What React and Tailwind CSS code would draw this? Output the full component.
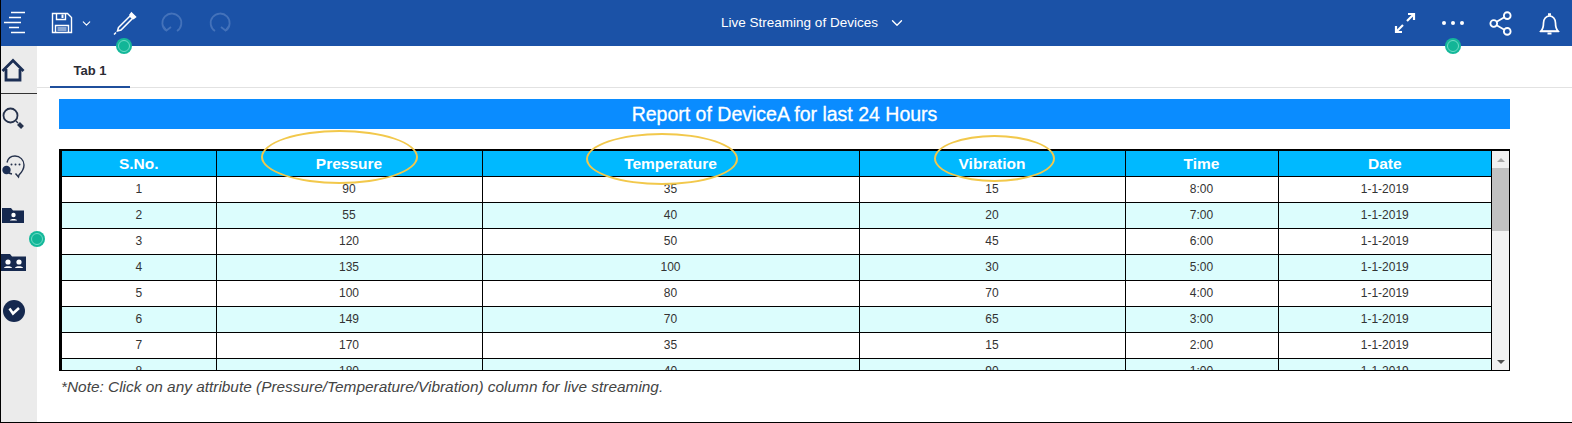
import { Share2, ChevronDown } from "lucide-react";

const rows = [
  [1, 90, 35, 15, "8:00"],
  [2, 55, 40, 20, "7:00"],
  [3, 120, 50, 45, "6:00"],
  [4, 135, 100, 30, "5:00"],
  [5, 100, 80, 70, "4:00"],
  [6, 149, 70, 65, "3:00"],
  [7, 170, 35, 15, "2:00"],
  [8, 180, 40, 90, "1:00"],
];

const headers = ["S.No.", "Pressure", "Temperature", "Vibration", "Time", "Date"];

const Dot = ({ className }) => (
  <div
    className={`absolute w-[16px] h-[16px] rounded-full bg-[#14b89a] p-[2px] ${className}`}
  >
    <div className="w-full h-full rounded-full bg-[#12b597] border border-[#6fdcc6]" />
  </div>
);

const Ring = ({ className }) => (
  <div
    className={`absolute rounded-[50%] border-2 border-[#f2c84b] pointer-events-none ${className}`}
  />
);

const MenuIcon = () => (
  <svg width="24" height="24" viewBox="0 0 24 24" stroke="white" strokeWidth="1.6" fill="none">
    <path d="M8 1.500h14M6 6.500h12M1 11.500h17M6 16.500h10M8 21.500h14" />
  </svg>
);

const SaveIcon = () => (
  <svg width="22" height="22" viewBox="0 0 22 22" stroke="white" strokeWidth="1.4" fill="none">
    <path d="M1.500 1.500h15l4 4v15h-19z" />
    <path d="M5.500 1.500v6h9v-6M4.500 20.500v-7h13v7" />
    <path d="M11.500 2.500v3.500" strokeWidth="2" />
    <path d="M6.500 16h9M6.500 18h9" strokeWidth="1" />
  </svg>
);

const PencilIcon = () => (
  <svg width="24" height="24" viewBox="0 0 24 24" stroke="white" strokeWidth="1.500" fill="none">
    <path d="M5.500 16.500 17 5l2.500 2.500L8 19l-3.500 1z" />
    <path d="M18.500 2l4 4-2 1.500-3.500-3.500z" fill="white" />
    <path d="M1 23.500l2-2" />
  </svg>
);

const UndoIcon = ({ flip }) => (
  <svg
    width="24"
    height="24"
    viewBox="0 0 24 24"
    stroke="#4472ba"
    strokeWidth="1.800"
    fill="none"
    className={flip ? "-scale-x-100" : ""}
  >
    <path d="M6 19.500A9.500 9.500 0 1 1 17 20" />
    <path d="M3 15l3.500 4.500L11 16" />
  </svg>
);

const ExpandIcon = () => (
  <svg width="22" height="22" viewBox="0 0 22 22" stroke="white" strokeWidth="2.200" fill="none">
    <path d="M13 9l7-7M14 2h6v6M9 13l-7 7M2 14v6h6" />
  </svg>
);

const BellIcon = () => (
  <svg width="25" height="25" viewBox="0 0 25 25" stroke="white" strokeWidth="1.700" fill="none">
    <path d="M4 20c2-2 2.500-4 2.500-8 0-4 2.500-7 6-7s6 3 6 7c0 4 .5 6 2.500 8z" />
    <path d="M11 3.500h3" strokeWidth="2.500" />
    <path d="M3 20.500h19" strokeWidth="1.500" />
    <path d="M10.500 22.500h4" strokeWidth="2" />
  </svg>
);

const HomeIcon = () => (
  <svg width="24" height="24" viewBox="0 0 24 24" fill="none" stroke="#1c2f55" strokeWidth="2.800">
    <path d="M1.500 13 12 2.500 22.500 13" />
    <path d="M5 11v11h14V11" />
  </svg>
);

const SearchIcon = () => (
  <svg width="24" height="24" viewBox="0 0 24 24" fill="none" stroke="#26324c">
    <circle cx="8.500" cy="8.500" r="7" strokeWidth="1.800" />
    <path d="M14 14l2 2" strokeWidth="1.500" />
    <path d="M16.500 16.500l4 4" strokeWidth="4" />
  </svg>
);

const ChatIcon = () => (
  <svg width="26" height="26" viewBox="0 0 26 26" fill="none" stroke="#26324c" strokeWidth="1.400">
    <path d="M6 8.500C7 4 10.500 2 14 2c5 0 9 4 9 9 0 4-2 7-5 10l-.5 2-3-3.500" />
    <path d="M6 17c1 1.500 2.500 2.500 5 3" />
    <circle cx="5.500" cy="16" r="4.200" fill="#1c2f55" stroke="none" />
    <circle cx="10.500" cy="10.500" r="1" fill="#26324c" stroke="none" />
    <circle cx="14.500" cy="10.500" r="1" fill="#26324c" stroke="none" />
    <circle cx="18.500" cy="10.500" r="1" fill="#26324c" stroke="none" />
  </svg>
);

const FolderPerson = () => (
  <svg width="24" height="18" viewBox="0 0 24 18">
    <path d="M1 1h9l2 2.500h11V16H1z" fill="#16294f" />
    <circle cx="12.500" cy="8" r="2.200" fill="white" />
    <path d="M9 13.500c0-2 7-2 7 0z" fill="white" />
  </svg>
);

const FolderPeople = () => (
  <svg width="26" height="19" viewBox="0 0 26 19">
    <path d="M0 1h9l2 2.500h14V18H0z" fill="#16294f" />
    <circle cx="7" cy="9" r="2.600" fill="white" />
    <path d="M3 15c0-2.500 8-2.500 8 0z" fill="white" />
    <circle cx="18" cy="9" r="2.600" fill="white" />
    <path d="M14 15c0-2.500 8-2.500 8 0z" fill="white" />
  </svg>
);

const CheckCircle = () => (
  <svg width="24" height="24" viewBox="0 0 24 24">
    <circle cx="12" cy="12" r="11" fill="#16294f" />
    <path d="M7.500 9.500l3.500 5 6-5.500" fill="none" stroke="white" strokeWidth="2.500" />
  </svg>
);

const App = () => {
  return (
    <div
      className="relative w-[1572px] h-[423px] overflow-hidden bg-white border-l border-b border-black flex flex-col text-[#222]"
      style={{ fontFamily: '"Liberation Sans", Arial, sans-serif' }}
    >
      {/* Top bar */}
      <div className="h-[46px] bg-[#1b52a7] flex items-center text-white shrink-0">
        <div className="flex items-center pl-[2px] w-[360px]">
          <MenuIcon />
          <div className="ml-[24px]">
            <SaveIcon />
          </div>
          <ChevronDown size={13} strokeWidth={2} className="ml-[7px]" />
          <div className="ml-[20px]">
            <PencilIcon />
          </div>
          <div className="ml-[23px]">
            <UndoIcon />
          </div>
          <div className="ml-[24px]">
            <UndoIcon flip />
          </div>
        </div>
        <div className="flex-1 flex items-center justify-center pr-[128px] text-[13.500px]">
          <span>Live Streaming of Devices</span>
          <ChevronDown size={18} strokeWidth={1.800} className="ml-[10px]" />
        </div>
        <div className="flex items-center pr-[10px]">
          <ExpandIcon />
          <div className="flex gap-[5px] ml-[26px]">
            <div className="w-[4px] h-[4px] rounded-full bg-white" />
            <div className="w-[4px] h-[4px] rounded-full bg-white" />
            <div className="w-[4px] h-[4px] rounded-full bg-white" />
          </div>
          <Share2 size={27} strokeWidth={1.600} className="ml-[23px]" />
          <div className="ml-[23px]">
            <BellIcon />
          </div>
        </div>
      </div>

      <div className="flex flex-1 min-h-0">
        {/* Side rail */}
        <div className="w-[36px] bg-[#ebebeb] shrink-0 flex flex-col items-start">
          <div className="w-full h-[48px] border-b border-[#333] flex items-center">
            <HomeIcon />
          </div>
          <div className="mt-[13px] pl-[1px]">
            <SearchIcon />
          </div>
          <div className="mt-[23px]">
            <ChatIcon />
          </div>
          <div className="mt-[27px]">
            <FolderPerson />
          </div>
          <div className="mt-[28px]">
            <FolderPeople />
          </div>
          <div className="mt-[27px] pl-[1px]">
            <CheckCircle />
          </div>
        </div>

        {/* Main */}
        <div className="flex-1 min-w-0">
          <div className="h-[42px] border-b border-[#e2e2e2] pl-[13px]">
            <div className="w-[80px] h-[42px] border-b-2 border-[#1f4f9c] flex items-center justify-center pt-[9px] text-[13px] font-bold text-[#2b2b33]">
              Tab 1
            </div>
          </div>

          <div className="ml-[22px] mt-[11px] w-[1451px] h-[30px] bg-[#0a8cff] text-white text-[19.500px] leading-[30px] text-center [-webkit-text-stroke:0.3px_white]">
            Report of DeviceA for last 24 Hours
          </div>

          <div className="ml-[22px] mt-[20px] w-[1451px] h-[222px] border border-black border-t-2 flex overflow-hidden">
            <div className="flex-1 min-w-0 overflow-hidden border-l-2 border-black">
              <table className="w-full table-fixed border-collapse text-[12px] text-center text-[#333]">
                <colgroup>
                  <col className="w-[154px]" />
                  <col className="w-[266px]" />
                  <col className="w-[377px]" />
                  <col className="w-[266px]" />
                  <col className="w-[153px]" />
                  <col />
                </colgroup>
                <thead>
                  <tr className="h-[25px] bg-[#00b9ff] text-white text-[15.500px] font-bold">
                    {headers.map((h) => (
                      <th key={h} className="border-l border-black first:border-l-0 font-bold">
                        {h}
                      </th>
                    ))}
                  </tr>
                </thead>
                <tbody>
                  {rows.map((r) => (
                    <tr
                      key={r[0]}
                      className={`h-[26px] border-t border-black ${r[0] % 2 === 0 ? "bg-[#dcfdfd]" : "bg-white"}`}
                    >
                      {r.map((v, i) => (
                        <td key={i} className="border-l border-black first:border-l-0">
                          {v}
                        </td>
                      ))}
                      <td className="border-l border-black">1-1-2019</td>
                    </tr>
                  ))}
                </tbody>
              </table>
            </div>
            <div className="w-[18px] shrink-0 bg-[#f1f1f1] border-l border-black flex flex-col items-center">
              <div className="h-[17px] flex items-center justify-center">
                <div className="w-0 h-0 border-x-[4px] border-x-transparent border-b-[4px] border-b-[#a8a8a8]" />
              </div>
              <div className="w-full h-[63px] bg-[#c1c1c1]" />
              <div className="flex-1" />
              <div className="h-[17px] flex items-center justify-center">
                <div className="w-0 h-0 border-x-[4px] border-x-transparent border-t-[4px] border-t-[#505050]" />
              </div>
            </div>
          </div>

          <p className="ml-[24px] mt-[4px] text-[15.400px] italic text-[#444]">
            *Note: Click on any attribute (Pressure/Temperature/Vibration) column for live streaming.
          </p>
        </div>
      </div>

      {/* Annotations over the page */}
      <Ring className="left-[260px] top-[130px] w-[157px] h-[54px]" />
      <Ring className="left-[585px] top-[133px] w-[152px] h-[52px]" />
      <Ring className="left-[933px] top-[135px] w-[121px] h-[47px]" />
      <Dot className="left-[115px] top-[38px]" />
      <Dot className="left-[1444px] top-[38px]" />
      <Dot className="left-[28px] top-[231px]" />
    </div>
  );
};

export default App;
